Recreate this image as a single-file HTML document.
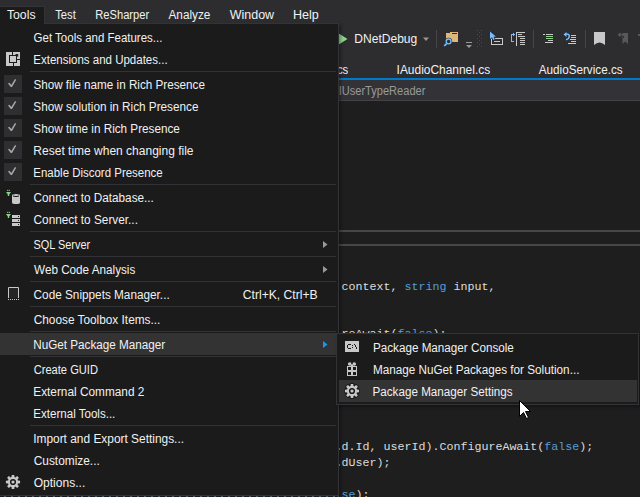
<!DOCTYPE html><html><head><meta charset="utf-8"><style>
html,body{margin:0;padding:0;}
body{width:640px;height:497px;overflow:hidden;position:relative;background:#1E1E1E;font-family:"Liberation Sans",sans-serif;}
.t{position:absolute;white-space:pre;transform-origin:0 0;}
.m{position:absolute;white-space:pre;font-family:"Liberation Mono",monospace;}
.r{position:absolute;}
svg{position:absolute;overflow:visible;}
</style></head><body>

<div class="r" style="left:0;top:0;width:640px;height:78px;background:#2D2D30"></div>
<div class="r" style="left:0;top:78px;width:640px;height:2px;background:#007ACC"></div>
<div class="r" style="left:0;top:80px;width:640px;height:20px;background:#333337"></div>
<div class="r" style="left:0;top:100px;width:640px;height:1px;background:#434346"></div>
<div class="r" style="left:339px;top:230px;width:301px;height:2px;background:#474747"></div>
<div class="r" style="left:339px;top:244px;width:301px;height:2px;background:#474747"></div>
<span class="t" style="left:55px;top:8.84px;font-size:12px;line-height:12px;color:#F1F1F1;transform:translateX(0.216px) scaleX(0.9344);">Test</span>
<span class="t" style="left:95px;top:8.84px;font-size:12px;line-height:12px;color:#F1F1F1;transform:translateX(0.239px) scaleX(0.9290);">ReSharper</span>
<span class="t" style="left:168px;top:8.84px;font-size:12px;line-height:12px;color:#F1F1F1;transform:translateX(0.486px) scaleX(0.9811);">Analyze</span>
<span class="t" style="left:229px;top:8.84px;font-size:12px;line-height:12px;color:#F1F1F1;transform:translateX(0.729px) scaleX(1.0405);">Window</span>
<span class="t" style="left:292px;top:8.84px;font-size:12px;line-height:12px;color:#F1F1F1;transform:translateX(0.878px) scaleX(1.0445);">Help</span>
<svg style="left:0;top:0" width="640" height="60" shape-rendering="crispEdges"><path d="M338 33 L347.5 39 L338 45 Z" fill="#8CD68A" shape-rendering="auto"/><path d="M423 37.5 L429 37.5 L426 41 Z" fill="#999" shape-rendering="auto"/><rect x="436" y="30" width="1" height="18" fill="#46464A"/><rect x="533" y="30" width="1" height="18" fill="#46464A"/><rect x="585" y="30" width="1" height="18" fill="#46464A"/><rect x="450" y="32" width="8" height="10" fill="#DCB67A"/><rect x="452" y="33" width="5" height="1" fill="#2D2D30"/><rect x="446" y="34" width="12" height="8" fill="#DCB67A"/><rect x="446" y="33" width="4" height="1" fill="#DCB67A"/></svg><svg style="left:0;top:0" width="640" height="60"><circle cx="448.6" cy="41.4" r="3.6" fill="#2D2D30"/><circle cx="448.6" cy="41.4" r="2.4" fill="#2D2D30" stroke="#75BEFF" stroke-width="1.3"/><path d="M446.6 43.6 L444.2 46" stroke="#75BEFF" stroke-width="1.7"/></svg><svg style="left:0;top:0" width="640" height="60" shape-rendering="crispEdges"><rect x="466" y="42" width="6" height="1" fill="#999"/></svg><svg style="left:0;top:0" width="640" height="60"><path d="M466 45 h6 l-3 3 z" fill="#999"/></svg><svg style="left:0;top:0" width="640" height="60" shape-rendering="crispEdges"><g fill="#4A4A4F"><rect x="477" y="30" width="1" height="1"/><rect x="481" y="30" width="1" height="1"/><rect x="477" y="34" width="1" height="1"/><rect x="481" y="34" width="1" height="1"/><rect x="477" y="38" width="1" height="1"/><rect x="481" y="38" width="1" height="1"/><rect x="477" y="42" width="1" height="1"/><rect x="481" y="42" width="1" height="1"/><rect x="477" y="46" width="1" height="1"/><rect x="481" y="46" width="1" height="1"/><rect x="479" y="32" width="1" height="1"/><rect x="479" y="36" width="1" height="1"/><rect x="479" y="40" width="1" height="1"/><rect x="479" y="44" width="1" height="1"/></g><rect x="491" y="38" width="12" height="1" fill="#C8C8C8"/><rect x="491" y="44" width="12" height="1" fill="#C8C8C8"/><rect x="491" y="38" width="1" height="7" fill="#C8C8C8"/><rect x="502" y="38" width="1" height="7" fill="#C8C8C8"/><rect x="494" y="41" width="6" height="1" fill="#C8C8C8"/></svg><svg style="left:0;top:0" width="640" height="60"><path d="M490 31.6 L490 38.8 L492 37.2 L493.2 40 L494.6 39.3 L493.5 36.8 L495.8 36.6 Z" fill="#2D2D30" stroke="#2D2D30" stroke-width="1.6"/><path d="M490 31.6 L490 38.8 L492 37.2 L493.2 40 L494.6 39.3 L493.5 36.8 L495.8 36.6 Z" fill="#75BEFF"/></svg><svg style="left:0;top:0" width="640" height="60" shape-rendering="crispEdges"><g fill="#75BEFF"><rect x="511" y="34" width="1" height="8"/><rect x="511" y="34" width="3" height="1"/><rect x="511" y="41" width="3" height="1"/><rect x="513" y="33" width="1" height="3"/><rect x="514" y="34" width="1" height="1"/></g><g fill="#C8C8C8"><rect x="516" y="32" width="1" height="14"/><rect x="516" y="32" width="9" height="1"/><rect x="518" y="34" width="4" height="1"/><rect x="518" y="36" width="7" height="1"/><rect x="520" y="38" width="5" height="1"/><rect x="520" y="40" width="5" height="1"/><rect x="520" y="42" width="5" height="1"/><rect x="520" y="44" width="5" height="1"/></g><g fill="#C8C8C8"><rect x="543" y="34" width="2" height="1"/><rect x="546" y="34" width="7" height="1"/><rect x="548" y="40" width="5" height="1"/><rect x="545" y="42" width="8" height="1"/></g><g fill="#8DD28A"><rect x="546" y="36" width="7" height="1"/><rect x="546" y="38" width="7" height="1"/></g><g fill="#C8C8C8"><rect x="571" y="35" width="5" height="1"/><rect x="571" y="37" width="5" height="1"/><rect x="570" y="39" width="6" height="1"/><rect x="571" y="41" width="5" height="1"/><rect x="568" y="43" width="8" height="1"/></g></svg><svg style="left:0;top:0" width="640" height="60"><path d="M565 34.2 Q569.5 33.5 569.3 36.5 Q569 39 566 39.8" fill="none" stroke="#75BEFF" stroke-width="1.5"/><path d="M563.5 34.5 L566.5 32 L566.5 37 Z" fill="#75BEFF"/><path d="M594 32 h11 v13 Q599.5 40 594 45 z" fill="#C8C8C8"/><path d="M622.5 33 h5.5 v11 l-2.75 -2.5 l-2.75 2.5 z" fill="#58585B"/><path d="M617.5 34.7 L620.5 32.2 L620.5 37.2 Z" fill="#58585B"/><rect x="619.5" y="34.1" width="4.5" height="1.3" fill="#58585B"/><rect x="623" y="36" width="1" height="2" fill="#2D2D30"/><rect x="638" y="34" width="2" height="2" fill="#58585B"/></svg>
<span class="t" style="left:354px;top:33.14px;font-size:12px;line-height:12px;color:#F1F1F1;transform:translateX(0.353px) scaleX(1.0025);">DNetDebug</span>
<span class="t" style="left:336px;top:63.84px;font-size:12px;line-height:12px;color:#F1F1F1;transform:translateX(0.878px) scaleX(0.9452);">cs</span>
<span class="t" style="left:396px;top:63.84px;font-size:12px;line-height:12px;color:#F1F1F1;transform:translateX(0.592px) scaleX(0.9948);">IAudioChannel.cs</span>
<span class="t" style="left:538px;top:63.84px;font-size:12px;line-height:12px;color:#F1F1F1;transform:translateX(0.782px) scaleX(0.9740);">AudioService.cs</span>
<span class="t" style="left:338px;top:84.84px;font-size:12px;line-height:12px;color:#999999;transform:translateX(0.667px) scaleX(0.9222);">IUserTypeReader</span>
<span class="m" style="left:341.5px;top:279.39px;font-size:11.67px;line-height:16px"><span style="color:#DCDCDC">context, </span><span style="color:#569CD6">string</span><span style="color:#DCDCDC"> input,</span></span>
<span class="m" style="left:341.5px;top:326.09px;font-size:11.67px;line-height:16px"><span style="color:#DCDCDC">reAwait(</span><span style="color:#569CD6">false</span><span style="color:#DCDCDC">);</span></span>
<span class="m" style="left:334.5px;top:439.39px;font-size:11.67px;line-height:16px"><span style="color:#DCDCDC">.</span><span style="color:#DCDCDC">d.Id, userId).ConfigureAwait(</span><span style="color:#569CD6">false</span><span style="color:#DCDCDC">);</span></span>
<span class="m" style="left:334.5px;top:455.39px;font-size:11.67px;line-height:16px"><span style="color:#DCDCDC">.</span><span style="color:#DCDCDC">dUser);</span></span>
<span class="m" style="left:334.5px;top:487.39px;font-size:11.67px;line-height:16px"><span style="color:#569CD6">l</span><span style="color:#569CD6">se</span><span style="color:#DCDCDC">);</span></span>
<div class="r" style="left:339px;top:448px;width:1px;height:2px;background:#8A8A8A"></div>
<div class="r" style="left:339px;top:464px;width:1px;height:2px;background:#8A8A8A"></div>
<div class="r" style="left:-3px;top:23px;width:340px;height:471px;background:#1B1B1C;border:1px solid #333337;box-shadow:2px 2px 3px rgba(0,0,0,0.35)"></div>
<div class="r" style="left:0;top:496px;width:338px;height:1px;background:repeating-linear-gradient(90deg,#1B1B1C 0,#1B1B1C 4px,#4A5A70 4px,#4A5A70 6px,#1B1B1C 6px,#1B1B1C 7px)"></div>
<div class="r" style="left:-3px;top:6px;width:46px;height:17px;background:#1B1B1C;border:1px solid #333337;border-bottom:none"></div>
<span class="t" style="left:6px;top:8.84px;font-size:12px;line-height:12px;color:#F1F1F1;transform:translateX(0.886px) scaleX(1.0219);">Tools</span>
<div class="r" style="left:30px;top:71px;width:306px;height:1px;background:#333337"></div>
<div class="r" style="left:30px;top:184px;width:306px;height:1px;background:#333337"></div>
<div class="r" style="left:30px;top:231px;width:306px;height:1px;background:#333337"></div>
<div class="r" style="left:30px;top:256px;width:306px;height:1px;background:#333337"></div>
<div class="r" style="left:30px;top:281px;width:306px;height:1px;background:#333337"></div>
<div class="r" style="left:30px;top:306px;width:306px;height:1px;background:#333337"></div>
<div class="r" style="left:30px;top:331px;width:306px;height:1px;background:#333337"></div>
<div class="r" style="left:30px;top:356px;width:306px;height:1px;background:#333337"></div>
<div class="r" style="left:30px;top:425px;width:306px;height:1px;background:#333337"></div>
<span class="t" style="left:33px;top:31.84px;font-size:12px;line-height:12px;color:#F1F1F1;transform:translateX(0.620px) scaleX(0.9573);">Get Tools and Features...</span>
<span class="t" style="left:33px;top:53.84px;font-size:12px;line-height:12px;color:#F1F1F1;transform:translateX(0.314px) scaleX(0.9586);">Extensions and Updates...</span>
<span class="t" style="left:33px;top:78.84px;font-size:12px;line-height:12px;color:#F1F1F1;transform:translateX(0.376px) scaleX(0.9740);">Show file name in Rich Presence</span>
<span class="t" style="left:33px;top:100.84px;font-size:12px;line-height:12px;color:#F1F1F1;transform:translateX(0.365px) scaleX(0.9781);">Show solution in Rich Presence</span>
<span class="t" style="left:33px;top:122.84px;font-size:12px;line-height:12px;color:#F1F1F1;transform:translateX(0.365px) scaleX(0.9761);">Show time in Rich Presence</span>
<span class="t" style="left:33px;top:144.84px;font-size:12px;line-height:12px;color:#F1F1F1;transform:translateX(0.365px) scaleX(1.0004);">Reset time when changing file</span>
<span class="t" style="left:33px;top:166.84px;font-size:12px;line-height:12px;color:#F1F1F1;transform:translateX(0.322px) scaleX(0.9554);">Enable Discord Presence</span>
<span class="t" style="left:33px;top:191.84px;font-size:12px;line-height:12px;color:#F1F1F1;transform:translateX(0.588px) scaleX(0.9798);">Connect to Database...</span>
<span class="t" style="left:33px;top:213.84px;font-size:12px;line-height:12px;color:#F1F1F1;transform:translateX(0.565px) scaleX(0.9839);">Connect to Server...</span>
<span class="t" style="left:33px;top:238.84px;font-size:12px;line-height:12px;color:#F1F1F1;transform:translateX(0.482px) scaleX(0.9107);">SQL Server</span>
<span class="t" style="left:34px;top:263.84px;font-size:12px;line-height:12px;color:#F1F1F1;transform:translateX(0.059px) scaleX(0.9748);">Web Code Analysis</span>
<span class="t" style="left:33px;top:288.84px;font-size:12px;line-height:12px;color:#F1F1F1;transform:translateX(0.600px) scaleX(0.9806);">Code Snippets Manager...</span>
<span class="t" style="left:242px;top:288.84px;font-size:12px;line-height:12px;color:#F1F1F1;transform:translateX(0.812px) scaleX(1.0113);">Ctrl+K, Ctrl+B</span>
<span class="t" style="left:33px;top:313.84px;font-size:12px;line-height:12px;color:#F1F1F1;transform:translateX(0.714px) scaleX(0.9852);">Choose Toolbox Items...</span>
<div class="r" style="left:0;top:333px;width:336px;height:22px;background:#333334"></div>
<span class="t" style="left:33px;top:338.84px;font-size:12px;line-height:12px;color:#F1F1F1;transform:translateX(0.231px) scaleX(0.9748);">NuGet Package Manager</span>
<span class="t" style="left:33px;top:363.84px;font-size:12px;line-height:12px;color:#F1F1F1;transform:translateX(0.655px) scaleX(0.9275);">Create GUID</span>
<span class="t" style="left:33px;top:385.84px;font-size:12px;line-height:12px;color:#F1F1F1;transform:translateX(0.243px) scaleX(0.9857);">External Command 2</span>
<span class="t" style="left:33px;top:407.84px;font-size:12px;line-height:12px;color:#F1F1F1;transform:translateX(0.318px) scaleX(0.9629);">External Tools...</span>
<span class="t" style="left:33px;top:432.84px;font-size:12px;line-height:12px;color:#F1F1F1;transform:translateX(0.165px) scaleX(0.9921);">Import and Export Settings...</span>
<span class="t" style="left:33px;top:454.84px;font-size:12px;line-height:12px;color:#F1F1F1;transform:translateX(0.702px) scaleX(0.9903);">Customize...</span>
<span class="t" style="left:33px;top:476.84px;font-size:12px;line-height:12px;color:#F1F1F1;transform:translateX(0.714px) scaleX(1.0030);">Options...</span>
<svg style="left:0;top:0" width="640" height="497"><g transform="translate(6 52)"><rect width="14" height="14" fill="#C8C8C8"/><rect x="3" y="3" width="8" height="8" fill="#1B1B1C"/><rect x="6" y="0" width="1" height="3" fill="#1B1B1C"/><rect x="7" y="11" width="1" height="3" fill="#1B1B1C"/><rect x="11" y="7" width="3" height="1" fill="#1B1B1C"/><path d="M8.6 4.4 L10 3 L9 2 L12.2 2 L12.2 5.2 L11.2 4.2 L9.8 5.6 Z" fill="#1B1B1C"/><rect x="4" y="4" width="6" height="6" fill="#C8C8C8"/></g><rect x="4" y="75" width="18" height="18" fill="#2F2F32"/><g transform="translate(0 -44)"><path d="M8.0 127.5 L9.4 126.7 L11.3 129.1 L15.0 122.9 L16.2 123.7 L12.0 131.0 L10.8 131.0 Z" fill="#A8A8A8"/></g><rect x="4" y="97" width="18" height="18" fill="#2F2F32"/><g transform="translate(0 -22)"><path d="M8.0 127.5 L9.4 126.7 L11.3 129.1 L15.0 122.9 L16.2 123.7 L12.0 131.0 L10.8 131.0 Z" fill="#A8A8A8"/></g><rect x="4" y="119" width="18" height="18" fill="#2F2F32"/><g transform="translate(0 0)"><path d="M8.0 127.5 L9.4 126.7 L11.3 129.1 L15.0 122.9 L16.2 123.7 L12.0 131.0 L10.8 131.0 Z" fill="#A8A8A8"/></g><rect x="4" y="141" width="18" height="18" fill="#2F2F32"/><g transform="translate(0 22)"><path d="M8.0 127.5 L9.4 126.7 L11.3 129.1 L15.0 122.9 L16.2 123.7 L12.0 131.0 L10.8 131.0 Z" fill="#A8A8A8"/></g><rect x="4" y="163" width="18" height="18" fill="#2F2F32"/><g transform="translate(0 44)"><path d="M8.0 127.5 L9.4 126.7 L11.3 129.1 L15.0 122.9 L16.2 123.7 L12.0 131.0 L10.8 131.0 Z" fill="#A8A8A8"/></g><g transform="translate(0 186)"><path d="M6 6 h5 l-1.8 2.4 v1.6 h-1.4 v-1.6 z" fill="#8DD28A"/><rect x="7.2" y="3.8" width="1" height="1.2" fill="#8DD28A"/><rect x="8.8" y="3.8" width="1" height="1.2" fill="#8DD28A"/><path d="M12 9.5 q0 -1.5 4 -1.5 q4 0 4 1.5 v7 q0 1.5 -4 1.5 q-4 0 -4 -1.5 z" fill="#C8C8C8"/><path d="M13 10 q3 1.2 6 0" fill="none" stroke="#1B1B1C" stroke-width="1"/></g><g transform="translate(0 208)"><path d="M6 6 h5 l-1.8 2.4 v1.6 h-1.4 v-1.6 z" fill="#8DD28A"/><rect x="7.2" y="3.8" width="1" height="1.2" fill="#8DD28A"/><rect x="8.8" y="3.8" width="1" height="1.2" fill="#8DD28A"/><rect x="12" y="7" width="8" height="3" fill="#C8C8C8"/><rect x="12" y="11" width="8" height="3" fill="#C8C8C8"/><rect x="12" y="15" width="8" height="3" fill="#C8C8C8"/><rect x="18" y="8" width="1" height="1" fill="#1B1B1C"/><rect x="18" y="12" width="1" height="1" fill="#1B1B1C"/><rect x="18" y="16" width="1" height="1" fill="#1B1B1C"/></g><path d="M323 241 L327.5 244.5 L323 248 Z" fill="#999999"/><path d="M323 266 L327.5 269.5 L323 273 Z" fill="#999999"/><g transform="translate(0 283)"><rect x="9" y="5" width="9" height="10" fill="#252526"/><path d="M8.5 15 V4.5 H18.5 V15" fill="none" stroke="#C8C8C8" stroke-width="1"/><rect x="8" y="16" width="1" height="1" fill="#C8C8C8"/><rect x="10" y="16" width="1" height="1" fill="#C8C8C8"/><rect x="12" y="16" width="1" height="1" fill="#C8C8C8"/><rect x="14" y="16" width="1" height="1" fill="#C8C8C8"/><rect x="16" y="16" width="1" height="1" fill="#C8C8C8"/><rect x="18" y="16" width="1" height="1" fill="#C8C8C8"/></g><path d="M323 341 L327.5 344.5 L323 348 Z" fill="#1C97EA"/><path d="M11.51 477.12 L11.75 474.91 L14.25 474.91 L14.49 477.12 L15.39 477.50 L17.13 476.10 L18.90 477.87 L17.50 479.61 L17.88 480.51 L20.09 480.75 L20.09 483.25 L17.88 483.49 L17.50 484.39 L18.90 486.13 L17.13 487.90 L15.39 486.50 L14.49 486.88 L14.25 489.09 L11.75 489.09 L11.51 486.88 L10.61 486.50 L8.87 487.90 L7.10 486.13 L8.50 484.39 L8.12 483.49 L5.91 483.25 L5.91 480.75 L8.12 480.51 L8.50 479.61 L7.10 477.87 L8.87 476.10 L10.61 477.50Z" fill="#C8C8C8"/><circle cx="13" cy="482" r="2.35" fill="none" stroke="#1B1B1C" stroke-width="1.5"/><circle cx="13" cy="482" r="1.0" fill="#C8C8C8"/></svg>
<div class="r" style="left:336px;top:333px;width:301px;height:70px;background:#1B1B1C;border:1px solid #333337;box-shadow:2px 2px 3px rgba(0,0,0,0.35)"></div>
<div class="r" style="left:339px;top:380px;width:298px;height:22px;background:#333334"></div>
<span class="t" style="left:372px;top:341.84px;font-size:12px;line-height:12px;color:#F1F1F1;transform:translateX(0.910px) scaleX(0.9738);">Package Manager Console</span>
<span class="t" style="left:372px;top:363.84px;font-size:12px;line-height:12px;color:#F1F1F1;transform:translateX(0.894px) scaleX(0.9766);">Manage NuGet Packages for Solution...</span>
<span class="t" style="left:372px;top:385.84px;font-size:12px;line-height:12px;color:#F1F1F1;transform:translateX(0.518px) scaleX(0.9717);">Package Manager Settings</span>
<svg style="left:0;top:0" width="640" height="497"><rect x="345" y="341" width="14" height="11" fill="#C8C8C8"/><g fill="#1B1B1C" shape-rendering="crispEdges"><rect x="348" y="344" width="3" height="1"/><rect x="347" y="345" width="1" height="3"/><rect x="348" y="348" width="3" height="1"/><rect x="352" y="345" width="1" height="1"/><rect x="352" y="347" width="1" height="1"/><rect x="354" y="344" width="1" height="1"/><rect x="355" y="345" width="1" height="2"/><rect x="356" y="347" width="1" height="2"/></g><rect x="347" y="366" width="10" height="10" fill="#C8C8C8"/><g fill="#1B1B1C"><rect x="348" y="367" width="3" height="3"/><rect x="353" y="367" width="3" height="3"/><rect x="348" y="372" width="3" height="3"/><rect x="353" y="372" width="3" height="3"/></g><ellipse cx="349.8" cy="364" rx="1.9" ry="1.7" fill="#C8C8C8"/><ellipse cx="354.2" cy="364" rx="1.9" ry="1.7" fill="#C8C8C8"/><rect x="351" y="364.5" width="2" height="2" fill="#C8C8C8"/><rect x="351.5" y="362" width="1" height="2" fill="#1B1B1C"/><circle cx="352" cy="391" r="7.4" fill="#1B1B1C"/><path d="M350.51 386.12 L350.75 383.91 L353.25 383.91 L353.49 386.12 L354.39 386.50 L356.13 385.10 L357.90 386.87 L356.50 388.61 L356.88 389.51 L359.09 389.75 L359.09 392.25 L356.88 392.49 L356.50 393.39 L357.90 395.13 L356.13 396.90 L354.39 395.50 L353.49 395.88 L353.25 398.09 L350.75 398.09 L350.51 395.88 L349.61 395.50 L347.87 396.90 L346.10 395.13 L347.50 393.39 L347.12 392.49 L344.91 392.25 L344.91 389.75 L347.12 389.51 L347.50 388.61 L346.10 386.87 L347.87 385.10 L349.61 386.50Z" fill="#1B1B1C" stroke="#1B1B1C" stroke-width="1.6"/><path d="M350.51 386.12 L350.75 383.91 L353.25 383.91 L353.49 386.12 L354.39 386.50 L356.13 385.10 L357.90 386.87 L356.50 388.61 L356.88 389.51 L359.09 389.75 L359.09 392.25 L356.88 392.49 L356.50 393.39 L357.90 395.13 L356.13 396.90 L354.39 395.50 L353.49 395.88 L353.25 398.09 L350.75 398.09 L350.51 395.88 L349.61 395.50 L347.87 396.90 L346.10 395.13 L347.50 393.39 L347.12 392.49 L344.91 392.25 L344.91 389.75 L347.12 389.51 L347.50 388.61 L346.10 386.87 L347.87 385.10 L349.61 386.50Z" fill="#C8C8C8"/><circle cx="352" cy="391" r="2.35" fill="none" stroke="#1B1B1C" stroke-width="1.5"/><circle cx="352" cy="391" r="1.0" fill="#C8C8C8"/><path d="M519.5 400.5 V416.5 L523.5 412.5 L526.5 418.5 L528.5 417.5 L525.5 411.5 L530.5 411.5 Z" fill="#FFFFFF" stroke="#000" stroke-width="1"/></svg>
</body></html>
